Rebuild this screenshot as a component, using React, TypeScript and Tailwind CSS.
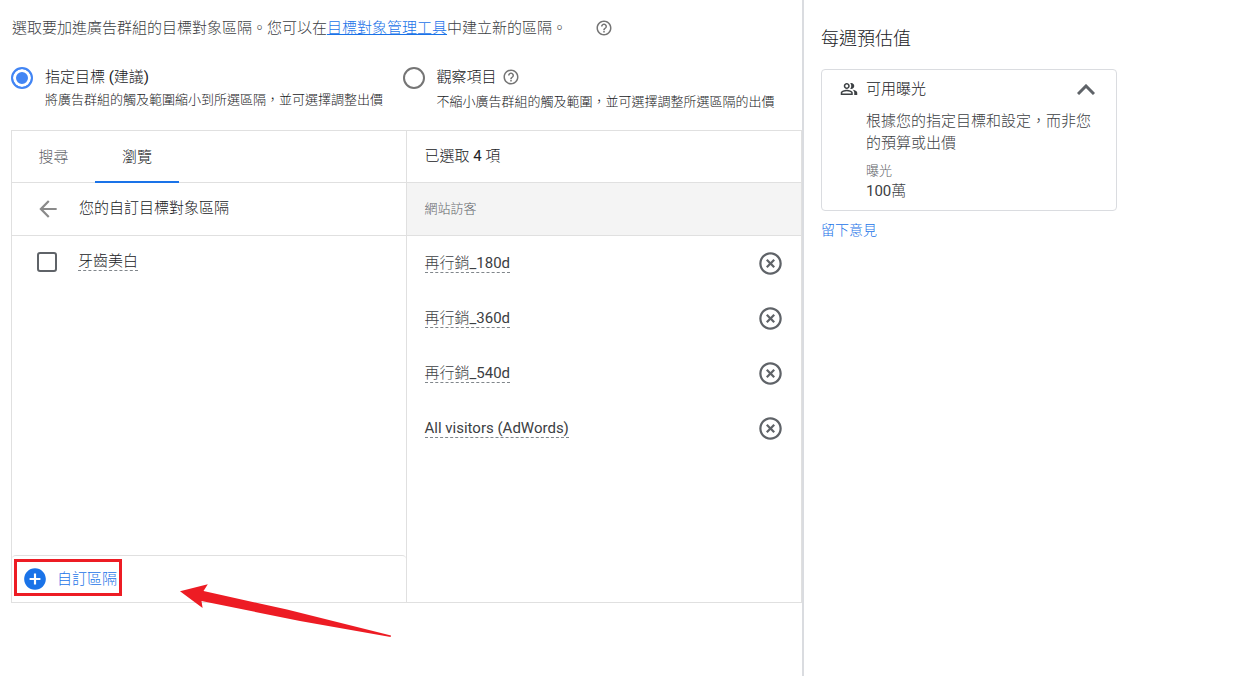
import { MdAddCircle, MdArrowBack, MdHelpOutline, MdHighlightOff } from "react-icons/md";

const selected = ["再行銷_180d", "再行銷_360d", "再行銷_540d", "All visitors (AdWords)"];

const radioClass =
  "size-[22px] shrink-0 appearance-none rounded-full border-2 border-[#757575] bg-white checked:border-[#4285f4] checked:bg-[#4285f4] checked:shadow-[inset_0_0_0_3px_white]";

function HelpButton() {
  return (
    <button type="button" aria-label="說明" className="text-[#757575]">
      <MdHelpOutline size={18} />
    </button>
  );
}

function PeopleIcon() {
  return (
    <svg viewBox="0 0 24 24" className="size-[18px] text-[#3c4043]" fill="currentColor" aria-hidden="true">
      <path d="M16.67 13.13C18.04 14.06 19 15.32 19 17v3h4v-3c0-2.18-3.57-3.47-6.33-3.87zM15 12c2.21 0 4-1.79 4-4s-1.79-4-4-4c-.47 0-.91.1-1.33.24C14.5 5.27 15 6.58 15 8s-.5 2.73-1.33 3.76c.42.14.86.24 1.33.24zM9 12c2.21 0 4-1.79 4-4s-1.79-4-4-4-4 1.79-4 4 1.79 4 4 4zm0-6c1.1 0 2 .9 2 2s-.9 2-2 2-2-.9-2-2 .9-2 2-2zm0 7c-2.67 0-8 1.34-8 4v3h16v-3c0-2.66-5.33-4-8-4zm6 5H3v-.99C3.2 16.29 6.3 15 9 15s5.8 1.29 6 2v1z" />
    </svg>
  );
}

function TargetingOptions() {
  return (
    <div className="mt-[27px] grid grid-cols-2 pr-2">
      <div className="flex gap-3">
        <input id="targeting" name="mode" type="radio" defaultChecked className={radioClass} />
        <label htmlFor="targeting" className="flex flex-col">
          <span className="leading-5 text-[#202124]">指定目標 (建議)</span>
          <span className="mt-[3px] text-[13px] leading-5 text-[#202124]">
            將廣告群組的觸及範圍縮小到所選區隔，並可選擇調整出價
          </span>
        </label>
      </div>
      <div className="flex gap-3">
        <input id="observation" name="mode" type="radio" className={radioClass} />
        <div className="flex flex-col">
          <div className="flex h-5 items-center gap-[5px]">
            <label htmlFor="observation" className="leading-5 text-[#202124]">
              觀察項目
            </label>
            <HelpButton />
          </div>
          <span className="mt-[5px] text-[13px] leading-5 text-[#202124]">
            不縮小廣告群組的觸及範圍，並可選擇調整所選區隔的出價
          </span>
        </div>
      </div>
    </div>
  );
}

function BrowsePane() {
  return (
    <section className="flex flex-col border-r border-[#e0e0e0]">
      <div role="tablist" className="flex h-[52px] border-b border-[#e0e0e0]">
        <button type="button" role="tab" aria-selected="false" className="w-[83px] pt-[2px] text-[#5f6368]">
          搜尋
        </button>
        <button
          type="button"
          role="tab"
          aria-selected="true"
          className="-mb-px w-[84px] border-b-2 border-[#1a73e8] pt-[3px] text-[#202124]"
        >
          瀏覽
        </button>
      </div>
      <div className="flex h-[53px] items-center gap-[18px] border-b border-[#e0e0e0] pl-[23px]">
        <button type="button" aria-label="返回" className="text-[#8a8a8a]">
          <MdArrowBack size={26} />
        </button>
        <h2 className="pb-[2px] text-[#202124]">您的自訂目標對象區隔</h2>
      </div>
      <div className="flex h-[52px] items-center gap-[21px] pl-[25px]">
        <input
          id="segment"
          type="checkbox"
          className="size-5 appearance-none rounded-[3px] border-2 border-[#5f6368] checked:bg-[#1a73e8]"
        />
        <label
          htmlFor="segment"
          className="mb-[2px] border-b border-dashed border-[#80868b] leading-[18px] text-[#202124]"
        >
          牙齒美白
        </label>
      </div>
      <div className="relative mt-auto flex h-[47px] items-center rounded-t border-t border-[#e0e0e0] pl-[10px]">
        <button type="button" className="flex items-center gap-[9px] text-[#1a73e8]">
          <MdAddCircle size={26} />
          自訂區隔
        </button>
        <div className="pointer-events-none absolute top-[3px] left-[2px] h-[37px] w-[108px] border-[3px] border-[#ed1c24]" />
        <svg
          aria-hidden="true"
          viewBox="180 584 212 54"
          className="pointer-events-none absolute top-7 left-[168px] h-[54px] w-[212px]"
          fill="#ed1c24"
        >
          <path d="M180 591.3 207.8 584.3 203.5 591 287 609.6 391 635.4 390.6 637 300 621 201.5 601 202.6 608Z" />
        </svg>
      </div>
    </section>
  );
}

function SelectedPane() {
  return (
    <section>
      <h2 className="flex h-[52px] items-center border-b border-[#e0e0e0] px-[18px] text-[#202124]">已選取 4 項</h2>
      <h3 className="flex h-[53px] items-center border-b border-[#e0e0e0] bg-[#f4f4f4] px-[18px] text-[13px] text-[#5f6368]">
        網站訪客
      </h3>
      <ul>
        {selected.map((name) => (
          <li key={name} className="flex h-[55px] items-center justify-between pr-[17px] pl-[18px]">
            <span className="border-b border-dashed border-[#80868b] leading-[18px]">{name}</span>
            <button type="button" aria-label={"移除 " + name} className="text-[#5f6368]">
              <MdHighlightOff size={27} />
            </button>
          </li>
        ))}
      </ul>
    </section>
  );
}

function Estimates() {
  return (
    <aside className="pt-[27px] pr-4 pl-[17px]">
      <h2 className="text-[18px] leading-6 text-[#202124]">每週預估值</h2>
      <div className="mt-[18px] max-w-[296px] rounded border border-[#dadce0] pt-2 pr-[18px] pb-[9px] pl-[18px]">
        <div className="flex items-center">
          <PeopleIcon />
          <h3 className="ml-2 leading-[22px] text-[#202124]">可用曝光</h3>
          <button type="button" aria-label="收合" className="ml-auto pr-[3px] text-[#5f6368]">
            <svg viewBox="0 0 18 11" className="h-[11px] w-[18px]" fill="none" stroke="currentColor" strokeWidth="3">
              <path d="M1 10 9 2l8 8" />
            </svg>
          </button>
        </div>
        <div className="ml-[26px]">
          <p className="mt-[10px] leading-[22px]">根據您的指定目標和設定，而非您的預算或出價</p>
          <p className="mt-[7px] text-[13px] leading-5 text-[#5f6368]">曝光</p>
          <p className="leading-5">100萬</p>
        </div>
      </div>
      <a href="#feedback" className="mt-2 inline-block text-[14px] leading-[22px] text-[#1a73e8]">
        留下意見
      </a>
    </aside>
  );
}

export default function App() {
  return (
    <div
      lang="zh-Hant"
      className="grid min-h-screen grid-cols-[804fr_440fr] bg-white font-[Roboto,'Noto_Sans_CJK_TC_Light','Noto_Sans_CJK_TC',sans-serif] text-[15px] text-[#3c4043]"
    >
      <main className="border-r-2 border-[#dadce0] pt-4 pl-[11px]">
        <div className="flex items-center gap-7 pl-px leading-6">
          <p>
            選取要加進廣告群組的目標對象區隔。您可以在
            <a href="#audience-manager" className="text-[#1a73e8] underline">
              目標對象管理工具
            </a>
            中建立新的區隔。
          </p>
          <HelpButton />
        </div>
        <TargetingOptions />
        <div className="mt-[18px] grid min-h-[473px] grid-cols-2 border border-[#e0e0e0]">
          <BrowsePane />
          <SelectedPane />
        </div>
      </main>
      <Estimates />
    </div>
  );
}
